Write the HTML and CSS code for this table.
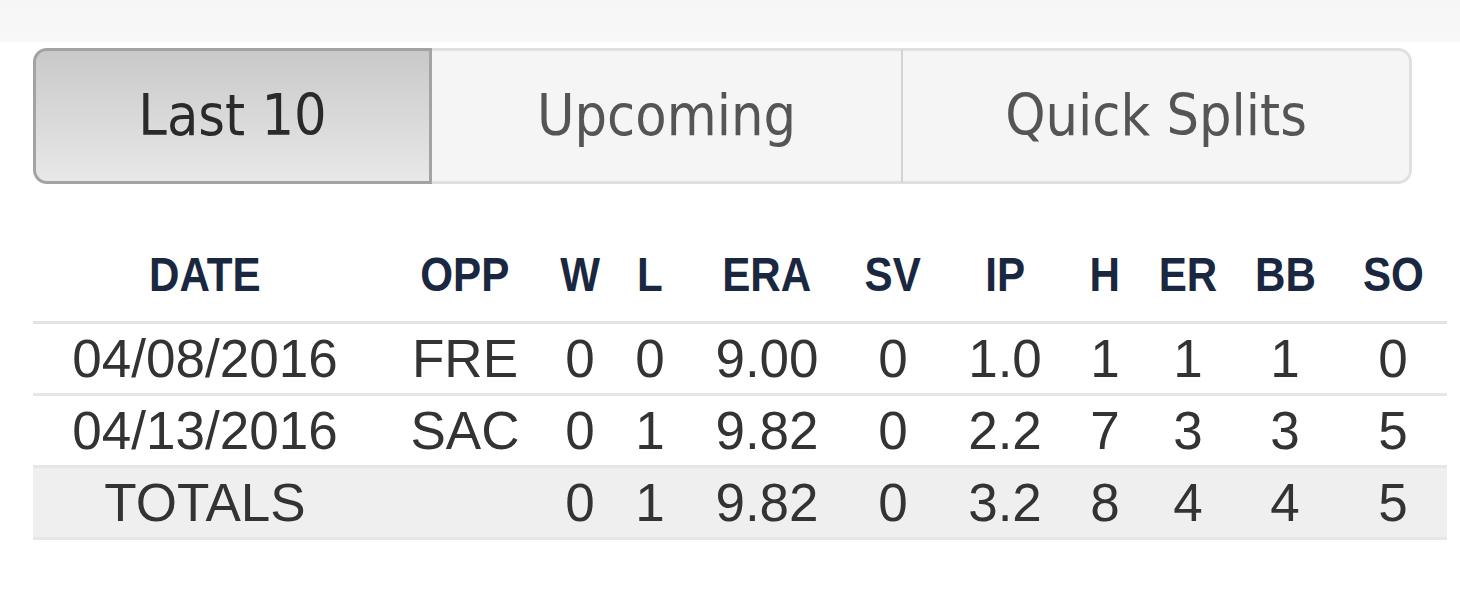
FILE: index.html
```html
<!DOCTYPE html>
<html>
<head>
<meta charset="utf-8">
<link rel="stylesheet" href="styles.css">
</head>
<body>
<div class="topband"></div>
<div class="wrap">
  <div class="tabs">
    <div class="tab active">Last 10</div>
    <div class="tab upcoming">Upcoming</div>
    <div class="tab splits">Quick Splits</div>
  </div>
  <table class="stats">
    <colgroup>
      <col class="c-date"><col class="c-opp"><col class="c-w"><col class="c-l"><col class="c-era"><col class="c-sv"><col class="c-ip"><col class="c-h"><col class="c-er"><col class="c-bb"><col class="c-so">
    </colgroup>
    <thead>
      <tr><th><span>DATE</span></th><th><span>OPP</span></th><th><span>W</span></th><th><span>L</span></th><th><span>ERA</span></th><th><span>SV</span></th><th><span>IP</span></th><th><span>H</span></th><th><span>ER</span></th><th><span>BB</span></th><th><span>SO</span></th></tr>
    </thead>
    <tbody>
      <tr><td>04/08/2016</td><td>FRE</td><td>0</td><td>0</td><td>9.00</td><td>0</td><td>1.0</td><td>1</td><td>1</td><td>1</td><td>0</td></tr>
      <tr><td>04/13/2016</td><td>SAC</td><td>0</td><td>1</td><td>9.82</td><td>0</td><td>2.2</td><td>7</td><td>3</td><td>3</td><td>5</td></tr>
      <tr class="totals"><td>TOTALS</td><td></td><td>0</td><td>1</td><td>9.82</td><td>0</td><td>3.2</td><td>8</td><td>4</td><td>4</td><td>5</td></tr>
    </tbody>
  </table>
</div>
</body>
</html>
```
FILE: styles.css
```css
html, body {
  margin: 0;
  padding: 0;
  background: #ffffff;
}
.topband {
  height: 42px;
  background: linear-gradient(#f6f6f6, #f8f8f8);
}
.wrap {
  padding: 6px 0 0 33px;
}
.tabs {
  display: flex;
  width: 1379px;
  height: 136px;
  box-sizing: border-box;
}
.tab {
  display: flex;
  align-items: center;
  justify-content: center;
  box-sizing: border-box;
  font-family: "DejaVu Sans Condensed", "DejaVu Sans", sans-serif;
  font-size: 57px;
  color: #555;
  background: #f5f5f5;
  border: 3px solid #e0e0e0;
  padding-bottom: 2px;
}
.tab.active {
  width: 399px;
  color: #2a2a2a;
  background: linear-gradient(#c9c9c9, #e8e8e8);
  border-color: #a3a3a3;
  border-radius: 14px 0 0 14px;
}
.tab.upcoming {
  width: 471px;
  border-left: none;
  border-right: 2px solid #d4d4d4;
}
.tab.splits {
  flex: 1;
  border-left: none;
  border-radius: 0 14px 14px 0;
}
.stats {
  margin-top: 46px;
  border-collapse: collapse;
  table-layout: fixed;
  width: 1414px;
}
.c-date { width: 344px; }
.c-opp { width: 176px; }
.c-w { width: 54px; }
.c-l { width: 86px; }
.c-era { width: 148px; }
.c-sv { width: 104px; }
.c-ip { width: 120px; }
.c-h { width: 80px; }
.c-er { width: 86px; }
.c-bb { width: 108px; }
.c-so { width: 108px; }
.stats th {
  font-family: "Liberation Sans", Arial, sans-serif;
  font-weight: bold;
  font-size: 49px;
  color: #1a2740;
  height: 87px;
  padding: 0 0 4px;
  text-align: center;
  white-space: nowrap;
  border-bottom: 3px solid #e3e3e3;
}
.stats th span {
  display: inline-block;
  transform: scaleX(0.86);
}
.stats td {
  font-family: "Liberation Sans", Arial, sans-serif;
  font-size: 53px;
  color: #333;
  height: 69px;
  padding: 0;
  text-align: center;
  border-bottom: 3px solid #e6e6e6;
}
.stats tr.totals td {
  background: #efefef;
}
```
